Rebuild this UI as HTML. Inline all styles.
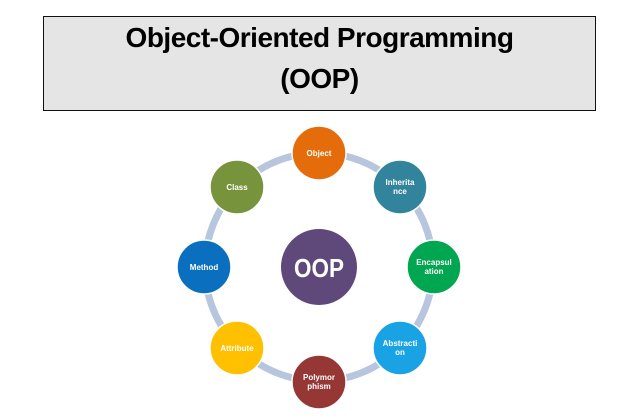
<!DOCTYPE html>
<html><head><meta charset="utf-8"><style>
html,body{margin:0;padding:0;background:#fff;width:638px;height:420px;overflow:hidden;font-family:"Liberation Sans",sans-serif}
.box{position:absolute;left:43px;top:16px;width:551px;height:93px;background:#e5e5e5;border:1px solid #111}
.t{position:absolute;left:0;width:100%;text-align:center;font-weight:bold;font-size:28px;line-height:32px;color:#000;letter-spacing:-0.5px}
</style></head><body>
<div class="box">
<div class="t" style="top:5px">Object-Oriented Programming</div>
<div class="t" style="top:46px">(OOP)</div>
</div>
<svg width="638" height="420" style="position:absolute;left:0;top:0">
<circle cx="319" cy="267" r="114" fill="none" stroke="#b7c6dd" stroke-width="7"/>
<g font-family="Liberation Sans,sans-serif" font-weight="bold" font-size="8" fill="#fff" text-anchor="middle">
<circle cx="319" cy="267" r="38" fill="#5f497a"/>
<text x="319" y="277" font-size="26" textLength="50" lengthAdjust="spacingAndGlyphs">OOP</text>
<circle cx="319" cy="153" r="27" fill="#e46c0a" stroke="#fff" stroke-width="1.5"/><text x="319" y="156">Object</text>
<circle cx="400" cy="187" r="27" fill="#31849b" stroke="#fff" stroke-width="1.5"/><text x="400" y="185">Inherita</text><text x="400" y="194">nce</text>
<circle cx="434" cy="267" r="27" fill="#00a650" stroke="#fff" stroke-width="1.5"/><text x="434" y="265">Encapsul</text><text x="434" y="274">ation</text>
<circle cx="400" cy="348" r="27" fill="#1aa3e4" stroke="#fff" stroke-width="1.5"/><text x="400" y="346">Abstracti</text><text x="400" y="355">on</text>
<circle cx="319" cy="382" r="27" fill="#953735" stroke="#fff" stroke-width="1.5"/><text x="319" y="380">Polymor</text><text x="319" y="389">phism</text>
<circle cx="237" cy="348" r="27" fill="#ffc000" stroke="#fff" stroke-width="1.5"/><text x="237" y="351">Attribute</text>
<circle cx="204" cy="267" r="27" fill="#0b6fc0" stroke="#fff" stroke-width="1.5"/><text x="204" y="270">Method</text>
<circle cx="237" cy="187" r="27" fill="#77933c" stroke="#fff" stroke-width="1.5"/><text x="237" y="190">Class</text>
</g>
</svg>
</body></html>
